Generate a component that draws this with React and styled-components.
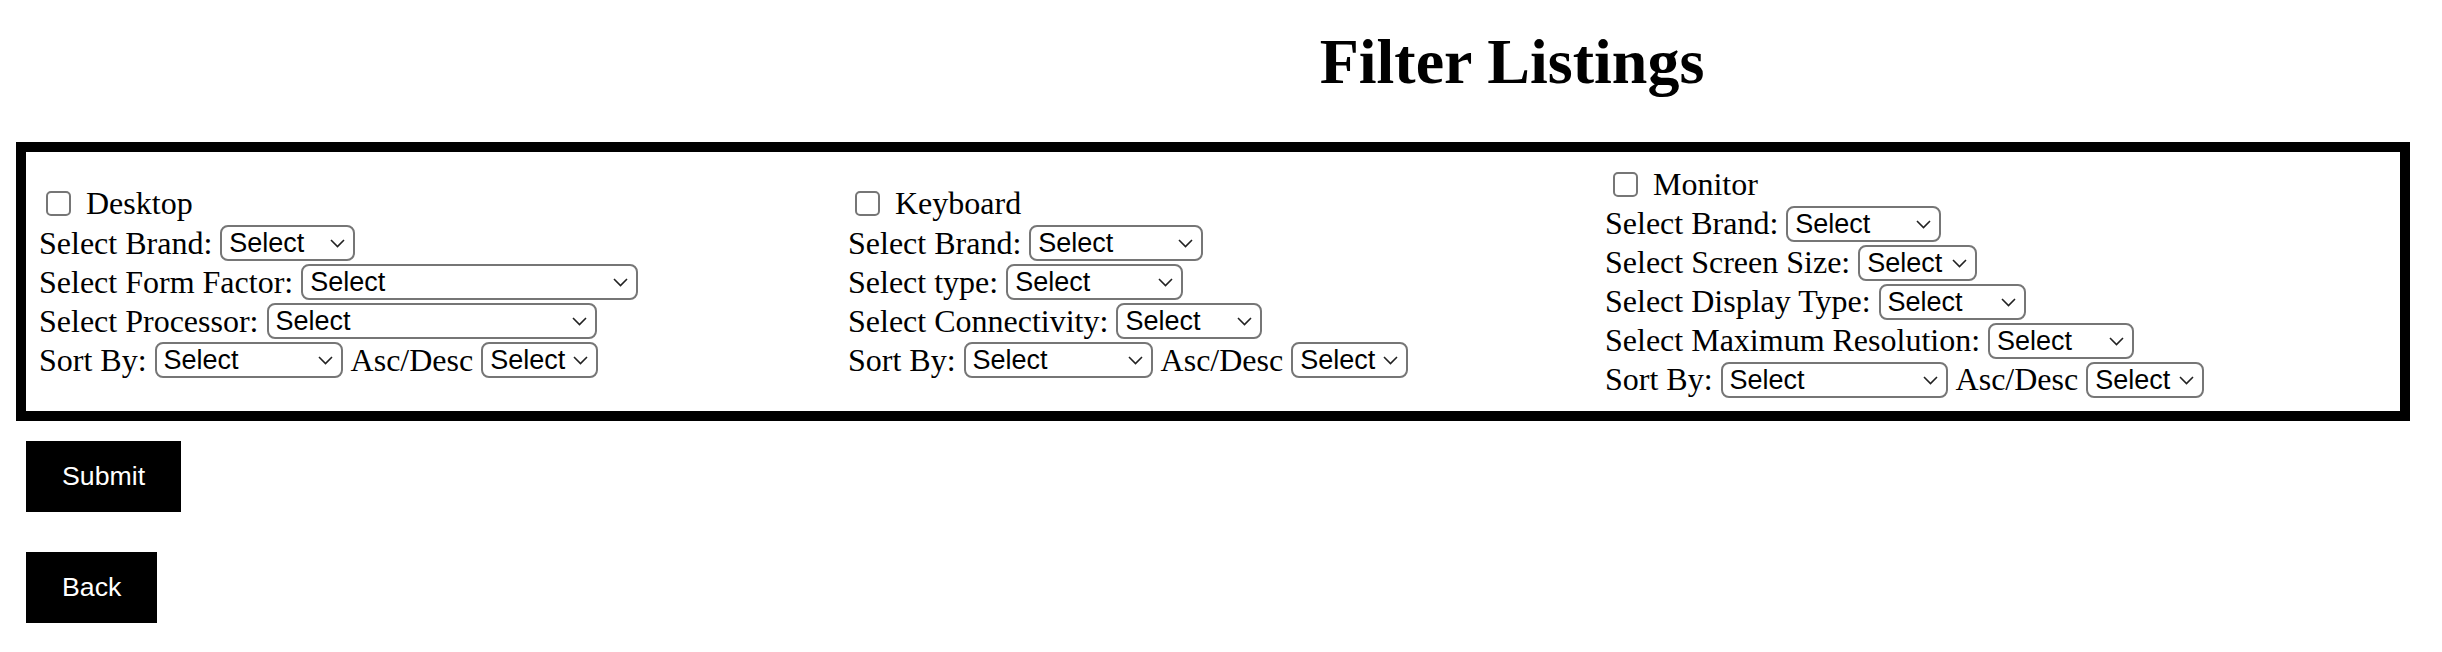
import styled, { createGlobalStyle } from "styled-components";

const GlobalStyle = createGlobalStyle`
  html, body {
    margin: 0;
    padding: 0;
    background: #fff;
  }
  body {
    font-family: "Liberation Serif", "Times New Roman", serif;
    color: #000;
  }
`;

const Page = styled.div`
  padding-top: 30px;
`;

const Title = styled.h1`
  margin: 0 0 48px;
  padding-left: 582px;
  text-align: center;
  font-size: 64px;
  line-height: 64px;
  font-weight: bold;
`;

const Panel = styled.div`
  box-sizing: border-box;
  margin-left: 16px;
  width: 2394px;
  height: 279px;
  border: 10px solid #000;
  padding-left: 13px;
  display: grid;
  grid-template-columns: 809px 757px 1fr;
  align-items: center;
`;

const Column = styled.div`
  display: flex;
  flex-direction: column;
`;

const HeaderRow = styled.label`
  height: 40px;
  display: flex;
  align-items: center;
  padding-left: ${({ $indent }) => $indent || 7}px;
  gap: 15px;
  font-size: 32px;
`;

const Row = styled.div`
  height: 39px;
  display: flex;
  align-items: center;
  gap: 8px;
  font-size: 32px;
  white-space: nowrap;
`;

const Checkbox = styled.input.attrs({ type: "checkbox" })`
  appearance: none;
  box-sizing: border-box;
  width: 25px;
  height: 25px;
  margin: 0;
  border: 2px solid #767676;
  border-radius: 5px;
  background: #fff;
`;

const SelectWrap = styled.span`
  position: relative;
  display: inline-flex;
  width: ${({ $w }) => $w}px;
  height: 36px;
`;

const Select = styled.select`
  appearance: none;
  box-sizing: border-box;
  width: 100%;
  height: 100%;
  margin: 0;
  padding: 0 0 0 7px;
  border: 2px solid #767676;
  border-radius: 8px;
  background: #fff;
  color: #000;
  font-family: "Liberation Sans", Arial, sans-serif;
  font-size: 27px;
`;

const Chevron = styled.svg`
  position: absolute;
  right: 10px;
  top: 14px;
  pointer-events: none;
`;

const Buttons = styled.div`
  display: flex;
  flex-direction: column;
  align-items: flex-start;
  gap: 40px;
  padding: 20px 0 0 26px;
`;

const Button = styled.button`
  height: 71px;
  padding: 0 36px;
  border: none;
  background: #000;
  color: #fff;
  font-family: "Liberation Sans", Arial, sans-serif;
  font-size: 26.7px;
  cursor: pointer;
`;

function Dropdown({ width }) {
  return (
    <SelectWrap $w={width}>
      <Select defaultValue="">
        <option value="">Select</option>
      </Select>
      <Chevron width="15" height="9" viewBox="0 0 15 9">
        <path d="M1 1 L7.5 7.5 L14 1" fill="none" stroke="#222" strokeWidth="1.6" />
      </Chevron>
    </SelectWrap>
  );
}

const groups = [
  {
    name: "Desktop",
    indent: 7,
    fields: [
      ["Select Brand:", 135],
      ["Select Form Factor:", 337],
      ["Select Processor:", 330],
    ],
    sort: [188, 117],
  },
  {
    name: "Keyboard",
    indent: 7,
    fields: [
      ["Select Brand:", 174],
      ["Select type:", 177],
      ["Select Connectivity:", 146],
    ],
    sort: [189, 117],
  },
  {
    name: "Monitor",
    indent: 8,
    fields: [
      ["Select Brand:", 155],
      ["Select Screen Size:", 119],
      ["Select Display Type:", 147],
      ["Select Maximum Resolution:", 146],
    ],
    sort: [227, 118],
  },
];

export default function App() {
  return (
    <Page>
      <GlobalStyle />
      <Title>Filter Listings</Title>
      <Panel>
        {groups.map((g) => (
          <Column key={g.name}>
            <HeaderRow $indent={g.indent}>
              <Checkbox />
              <span>{g.name}</span>
            </HeaderRow>
            {g.fields.map(([label, w]) => (
              <Row key={label}>
                <span>{label}</span>
                <Dropdown width={w} />
              </Row>
            ))}
            <Row>
              <span>Sort By:</span>
              <Dropdown width={g.sort[0]} />
              <span>Asc/Desc</span>
              <Dropdown width={g.sort[1]} />
            </Row>
          </Column>
        ))}
      </Panel>
      <Buttons>
        <Button>Submit</Button>
        <Button>Back</Button>
      </Buttons>
    </Page>
  );
}
